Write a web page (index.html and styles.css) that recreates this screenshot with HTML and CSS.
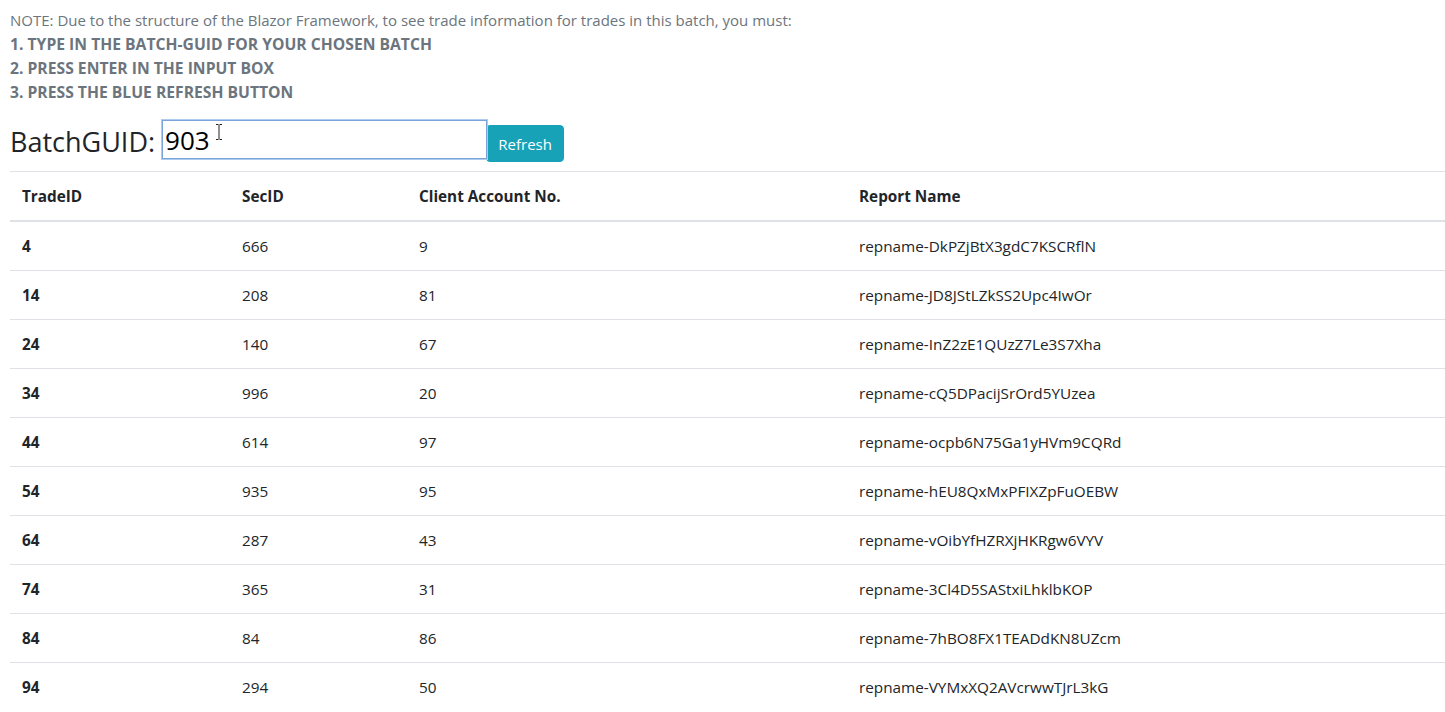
FILE: index.html
```html
<!DOCTYPE html>
<html>
<head>
<meta charset="utf-8">
<link rel="stylesheet" href="styles.css">
</head>
<body>
<div class="page">
  <div class="note">
    <div>NOTE: Due to the structure of the Blazor Framework, to see trade information for trades in this batch, you must:</div>
    <div class="step">1. TYPE IN THE BATCH-GUID FOR YOUR CHOSEN BATCH</div>
    <div class="step">2. PRESS ENTER IN THE INPUT BOX</div>
    <div class="step">3. PRESS THE BLUE REFRESH BUTTON</div>
  </div>
  <div class="batch">
    <span class="label">BatchGUID:</span>
    <span class="input-wrap">
      <input class="guid" type="text" value="903">
      <svg class="ibeam" width="8" height="16" viewBox="0 0 8 16"><path d="M1 0.5h2.5M4.5 0.5h2.5M4 1v14M1 15.5h2.5M4.5 15.5h2.5" stroke="#222" stroke-width="1" fill="none"/></svg>
    </span>
    <button class="btn">Refresh</button>
  </div>
  <table class="trades">
    <colgroup>
      <col style="width:220px"><col style="width:177px"><col style="width:440px"><col>
    </colgroup>
    <thead>
      <tr><th>TradeID</th><th>SecID</th><th>Client Account No.</th><th>Report Name</th></tr>
    </thead>
    <tbody>
      <tr><td class="id">4</td><td>666</td><td>9</td><td>repname-DkPZjBtX3gdC7KSCRflN</td></tr>
      <tr><td class="id">14</td><td>208</td><td>81</td><td>repname-JD8JStLZkSS2Upc4IwOr</td></tr>
      <tr><td class="id">24</td><td>140</td><td>67</td><td>repname-InZ2zE1QUzZ7Le3S7Xha</td></tr>
      <tr><td class="id">34</td><td>996</td><td>20</td><td>repname-cQ5DPacijSrOrd5YUzea</td></tr>
      <tr><td class="id">44</td><td>614</td><td>97</td><td>repname-ocpb6N75Ga1yHVm9CQRd</td></tr>
      <tr><td class="id">54</td><td>935</td><td>95</td><td>repname-hEU8QxMxPFIXZpFuOEBW</td></tr>
      <tr><td class="id">64</td><td>287</td><td>43</td><td>repname-vOibYfHZRXjHKRgw6VYV</td></tr>
      <tr><td class="id">74</td><td>365</td><td>31</td><td>repname-3Cl4D5SAStxiLhklbKOP</td></tr>
      <tr><td class="id">84</td><td>84</td><td>86</td><td>repname-7hBO8FX1TEADdKN8UZcm</td></tr>
      <tr><td class="id">94</td><td>294</td><td>50</td><td>repname-VYMxXQ2AVcrwwTJrL3kG</td></tr>
    </tbody>
  </table>
</div>
</body>
</html>
```

FILE: styles.css
```css
html, body {
  margin: 0;
  padding: 0;
  background: #fff;
}
body {
  font-family: "Segoe UI", "Open Sans", "Noto Sans", sans-serif;
  font-size: 16px;
  line-height: 1.5;
  color: #212529;
}
.page {
  padding: 8px 0 0 10px;
}
.note {
  font-size: 15px;
  line-height: 24px;
  color: #6c757d;
}
.step {
  font-weight: 700;
  font-size: 15.7px;
}
.batch {
  display: flex;
  align-items: flex-start;
  height: 52px;
  padding-top: 16px;
  box-sizing: border-box;
}
.label {
  font-size: 27px;
  line-height: 36px;
  margin-top: 4px;
  margin-right: 7px;
}
.input-wrap {
  position: relative;
  display: inline-block;
}
.guid {
  display: block;
  width: 325px;
  height: 39px;
  box-sizing: border-box;
  border: 1px solid #7aa3da;
  outline: 1px solid #aecbf0;
  outline-offset: 0;
  padding: 0 2px;
  font-family: inherit;
  font-size: 26px;
  color: #000;
  background: #fff;
  margin: 0;
}
.ibeam {
  position: absolute;
  left: 53px;
  top: 4px;
}
.btn {
  margin-top: 5px;
  margin-left: -1px;
  height: 37px;
  width: 78px;
  flex: none;
  background: #17a2b8;
  border: 1px solid #17a2b8;
  border-radius: 4px;
  color: #fff;
  font-family: inherit;
  font-size: 15px;
  padding: 0;
}
.trades {
  width: 1435px;
  border-collapse: collapse;
  table-layout: fixed;
  margin-top: 15px;
}
.trades th, .trades td {
  text-align: left;
  padding: 12px;
  line-height: 24px;
  border-top: 1px solid #dee2e6;
  vertical-align: top;
  font-size: 15.3px;
}
.trades thead th {
  border-bottom: 2px solid #dee2e6;
  font-weight: 700;
}
.trades td.id {
  font-weight: 700;
}
```
